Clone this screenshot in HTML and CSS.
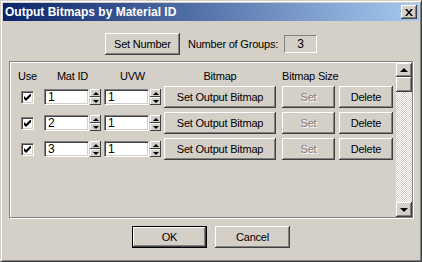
FILE: index.html
```html
<!DOCTYPE html>
<html lang="en">
<head>
    <meta charset="UTF-8">
    <meta name="viewport" content="width=device-width, initial-scale=1.0">
    <title>Output Bitmaps by Material ID</title>
    <link rel="stylesheet" href="styles.css">
</head>
<body>
    <div class="window">
        <!-- Title bar -->
        <div class="titlebar">
            <span class="title">Output Bitmaps by Material ID</span>
            <button class="close" title="Close">
                <svg width="8" height="7" viewBox="0 0 8 7"><path d="M0 0h2l2 2.4 2-2.4h2l-3 3.5 3 3.5h-2l-2-2.4-2 2.4h-2l3-3.5z" fill="#000"/></svg>
            </button>
        </div>

        <div class="client">
            <!-- Group count -->
            <div class="top-row">
                <button class="btn set-number">Set Number</button>
                <span class="groups-label">Number of Groups:</span>
                <div class="readout">3</div>
            </div>

            <!-- Rollout with one row per material id -->
            <div class="group">
                <div class="list">
                    <div class="row head">
                        <span class="c-use">Use</span>
                        <span class="c-mat">Mat ID</span>
                        <span class="c-uvw">UVW</span>
                        <span class="c-bmp">Bitmap</span>
                        <span class="c-size">Bitmap Size</span>
                    </div>

                    <div class="row">
                        <div class="c-use"><span class="check"><svg width="7" height="7" viewBox="0 0 7 7"><path d="M0 2l2 2 5-5v3l-5 5-2-2z" fill="#000"/></svg></span></div>
                        <div class="c-mat spin"><span class="edit">1</span><span class="spinner"><i class="up"></i><i class="down"></i></span></div>
                        <div class="c-uvw spin"><span class="edit">1</span><span class="spinner"><i class="up"></i><i class="down"></i></span></div>
                        <div class="c-bmp"><button class="btn">Set Output Bitmap</button></div>
                        <div class="c-size"><button class="btn disabled">Set</button></div>
                        <div class="c-del"><button class="btn">Delete</button></div>
                    </div>

                    <div class="row">
                        <div class="c-use"><span class="check"><svg width="7" height="7" viewBox="0 0 7 7"><path d="M0 2l2 2 5-5v3l-5 5-2-2z" fill="#000"/></svg></span></div>
                        <div class="c-mat spin"><span class="edit">2</span><span class="spinner"><i class="up"></i><i class="down"></i></span></div>
                        <div class="c-uvw spin"><span class="edit">1</span><span class="spinner"><i class="up"></i><i class="down"></i></span></div>
                        <div class="c-bmp"><button class="btn">Set Output Bitmap</button></div>
                        <div class="c-size"><button class="btn disabled">Set</button></div>
                        <div class="c-del"><button class="btn">Delete</button></div>
                    </div>

                    <div class="row">
                        <div class="c-use"><span class="check"><svg width="7" height="7" viewBox="0 0 7 7"><path d="M0 2l2 2 5-5v3l-5 5-2-2z" fill="#000"/></svg></span></div>
                        <div class="c-mat spin"><span class="edit">3</span><span class="spinner"><i class="up"></i><i class="down"></i></span></div>
                        <div class="c-uvw spin"><span class="edit">1</span><span class="spinner"><i class="up"></i><i class="down"></i></span></div>
                        <div class="c-bmp"><button class="btn">Set Output Bitmap</button></div>
                        <div class="c-size"><button class="btn disabled">Set</button></div>
                        <div class="c-del"><button class="btn">Delete</button></div>
                    </div>
                </div>

                <div class="scrollbar">
                    <span class="sb-btn"><i class="arrow-up"></i></span>
                    <span class="sb-thumb"></span>
                    <span class="sb-track"></span>
                    <span class="sb-btn sb-down"><i class="arrow-down"></i></span>
                </div>
            </div>

            <div class="bottom-row">
                <button class="btn default">OK</button>
                <button class="btn">Cancel</button>
            </div>
        </div>
    </div>
</body>
</html>
```

FILE: styles.css
```css
/* Classic grey dialog */
body {
    margin: 0;
    font-family: 'Liberation Sans', Arial, sans-serif;
    font-size: 11px;
    color: #000;
    background-color: #d4d0c8;
}

.window {
    width: 422px;
    height: 262px;
    box-sizing: border-box;
    padding: 2px;
    background-color: #d4d0c8;
    border: 1px solid;
    border-color: #d4d0c8 #404040 #404040 #d4d0c8;
    box-shadow: inset 1px 1px #fff, inset -1px -1px #808080;
}

/* Title bar */
.titlebar {
    height: 18px;
    display: flex;
    align-items: center;
    justify-content: space-between;
    padding-left: 2px;
    background: linear-gradient(to right, #0a246a, #a6caf0);
}

.title {
    color: #fff;
    font-weight: bold;
    font-size: 12px;
}

.close {
    width: 16px;
    height: 14px;
    margin-right: 2px;
    padding: 0;
    border: 0;
    display: flex;
    align-items: center;
    justify-content: center;
    background-color: #d4d0c8;
    box-shadow: inset -1px -1px #404040, inset 1px 1px #fff, inset -2px -2px #808080;
}

.client {
    display: flex;
    flex-direction: column;
}

/* Raised push button */
.btn {
    font: inherit;
    letter-spacing: -0.2px;
    color: #000;
    height: 22px;
    width: 100%;
    padding: 0;
    border: 0;
    background-color: #d4d0c8;
    box-shadow: inset -1px -1px #404040, inset 1px 1px #fff, inset -2px -2px #808080;
}

.btn.disabled {
    color: #808080;
    text-shadow: 1px 1px 0 #fff;
}

.btn.default {
    border: 1px solid #000;
}

.top-row {
    margin-top: 12px;
    height: 22px;
    display: flex;
    justify-content: center;
    align-items: center;
}

.set-number {
    width: 75px;
}

.groups-label {
    margin-left: 8px;
    letter-spacing: -0.2px;
}

.readout {
    width: 33px;
    height: 18px;
    margin-left: 6px;
    box-sizing: border-box;
    border: 1px solid;
    border-color: #808080 #fff #fff #808080;
    display: flex;
    align-items: center;
    justify-content: center;
    font-size: 12px;
}

/* Etched group box */
.group {
    margin: 6px 0 0 6px;
    width: 404px;
    height: 157px;
    box-sizing: border-box;
    padding-top: 1px;
    border: 1px solid #808080;
    box-shadow: inset 1px 1px #fff, 1px 1px #fff;
    display: flex;
}

.list {
    flex: 1;
    padding: 7px 0 0 6px;
}

.row {
    display: flex;
    align-items: center;
    height: 22px;
    margin-bottom: 4px;
}

.row.head {
    height: 13px;
    line-height: 13px;
    margin-bottom: 3px;
    letter-spacing: -0.2px;
    white-space: nowrap;
}

.c-use { width: 23px; display: flex; justify-content: center; }
.c-mat { width: 57px; margin-left: 5px; }
.c-uvw { width: 57px; margin-left: 3px; }
.c-bmp { width: 112px; margin-left: 3px; }
.c-size { width: 53px; margin-left: 6px; }
.c-del { width: 54px; margin-left: 4px; }

.head span { text-align: center; }

/* Checkbox */
.check {
    width: 13px;
    height: 13px;
    box-sizing: border-box;
    background-color: #fff;
    border: 1px solid;
    border-color: #808080 #fff #fff #808080;
    box-shadow: inset 1px 1px #404040, inset -1px -1px #d4d0c8;
    display: flex;
    align-items: center;
    justify-content: center;
}

/* Edit field with spinner */
.spin {
    display: flex;
}

.edit {
    width: 45px;
    height: 16px;
    box-sizing: border-box;
    padding-left: 3px;
    background-color: #fff;
    border: 1px solid;
    border-color: #808080 #fff #fff #808080;
    box-shadow: inset 1px 1px #404040, inset -1px -1px #d4d0c8;
    font-size: 12px;
    line-height: 14px;
}

.spinner {
    width: 11px;
    height: 16px;
    margin-left: 1px;
    display: flex;
    flex-direction: column;
}

.spinner i {
    flex: 1;
    display: flex;
    align-items: center;
    justify-content: center;
    background-color: #d4d0c8;
    box-shadow: inset -1px -1px #404040, inset 1px 1px #fff;
}

.spinner i::after {
    content: "";
    border-left: 3px solid transparent;
    border-right: 3px solid transparent;
}

.spinner .up::after { border-bottom: 3px solid #000; }
.spinner .down::after { border-top: 3px solid #000; }

/* Vertical scrollbar */
.scrollbar {
    width: 16px;
    display: flex;
    flex-direction: column;
}

.sb-btn,
.sb-thumb {
    height: 14px;
    flex: none;
    display: flex;
    align-items: center;
    justify-content: center;
    background-color: #d4d0c8;
    box-shadow: inset -1px -1px #404040, inset 1px 1px #fff, inset -2px -2px #808080;
}

.sb-thumb { height: 15px; }
.sb-down { height: 15px; }

.sb-track {
    flex: 1;
    background: repeating-conic-gradient(#d4d0c8 0 25%, #fff 0 50%) 0 0 / 2px 2px;
}

.arrow-up,
.arrow-down {
    border-left: 4px solid transparent;
    border-right: 4px solid transparent;
}

.arrow-up { border-bottom: 4px solid #000; }
.arrow-down { border-top: 4px solid #000; }

.bottom-row {
    margin-top: 8px;
    display: flex;
    justify-content: center;
    gap: 8px;
}

.bottom-row .btn {
    width: 75px;
}
```
